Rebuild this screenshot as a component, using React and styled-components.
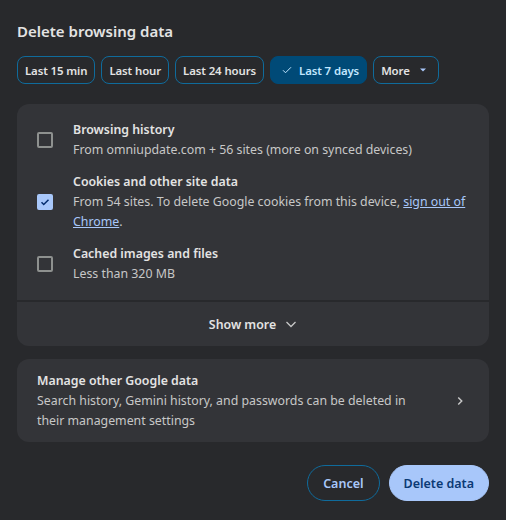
import React from "react";
import styled, { createGlobalStyle } from "styled-components";

const GlobalStyle = createGlobalStyle`
  html, body {
    margin: 0;
    padding: 0;
    background: #28292c;
  }
  body {
    font-family: "Noto Sans", "Open Sans", sans-serif;
    color: #e3e3e3;
  }
`;

const Dialog = styled.div`
  width: 506px;
  height: 520px;
  box-sizing: border-box;
  padding: 19px 17px 0 17px;
  display: flex;
  flex-direction: column;
`;

const Title = styled.h1`
  margin: 0;
  font-size: 15px;
  font-weight: 600;
  line-height: 24px;
  color: #e3e3e3;
`;

const Chips = styled.div`
  display: flex;
  gap: 6px;
  margin-top: 13px;
`;

const Chip = styled.button`
  flex: none;
  margin: 0;
  white-space: nowrap;
  height: 28px;
  box-sizing: border-box;
  padding: ${(p) => (p.$selected ? "0 7px 0 10px" : p.$menu ? "0 11px 0 7px" : "0 7px")};
  border-radius: 8px;
  border: 1px solid ${(p) => (p.$selected ? "#004a77" : "#0f6b9c")};
  background: ${(p) => (p.$selected ? "#004a77" : "transparent")};
  color: ${(p) => (p.$selected ? "#c2e7ff" : "#e3e3e3")};
  font-family: inherit;
  font-size: 11.4px;
  letter-spacing: -0.1px;
  font-weight: 600;
  display: flex;
  align-items: center;
  gap: ${(p) => (p.$menu ? "9px" : "6px")};
`;

const Card = styled.div`
  margin-top: 20px;
  display: flex;
  flex-direction: column;
  gap: 2px;
  border-radius: 12px;
  overflow: hidden;
`;

const Section = styled.div`
  background: #333438;
  padding: ${(p) => p.$pad || "0"};
`;

const Item = styled.div`
  display: flex;
  align-items: center;
  gap: 20px;
  padding: 6px 20px;
`;

const Box = styled.span`
  width: 16px;
  height: 16px;
  flex: none;
  box-sizing: border-box;
  border-radius: 2px;
  border: 2px solid ${(p) => (p.$checked ? "#a8c7fa" : "#8e918f")};
  background: ${(p) => (p.$checked ? "#a8c7fa" : "transparent")};
  display: flex;
  align-items: center;
  justify-content: center;
`;

const ItemText = styled.div`
  display: flex;
  flex-direction: column;
`;

const ItemTitle = styled.div`
  font-size: 12.35px;
  font-weight: 600;
  line-height: 20px;
  color: #e3e3e3;
`;

const ItemSub = styled.div`
  font-size: 12.35px;
  line-height: 20px;
  color: #c7c7c7;
`;

const Link = styled.a`
  color: #a8c7fa;
  text-decoration: underline;
`;

const ShowMore = styled.div`
  height: 44px;
  display: flex;
  align-items: center;
  justify-content: center;
  gap: 9px;
  font-size: 12.35px;
  font-weight: 600;
  color: #e3e3e3;
`;

const Manage = styled.div`
  margin-top: 13px;
  background: #333438;
  border-radius: 12px;
  padding: 12px 22px 11px 20px;
  display: flex;
  align-items: center;
  justify-content: space-between;
`;

const ManageText = styled.div`
  width: 380px;
`;

const Footer = styled.div`
  display: flex;
  justify-content: flex-end;
  gap: 9px;
  margin-top: 23px;
`;

const Button = styled.button`
  height: 36px;
  box-sizing: border-box;
  border-radius: 18px;
  padding: 0 ${(p) => (p.$primary ? "14px" : "15px")};
  border: 1px solid ${(p) => (p.$primary ? "#a8c7fa" : "#0f6b9c")};
  background: ${(p) => (p.$primary ? "#a8c7fa" : "transparent")};
  color: ${(p) => (p.$primary ? "#0b3a75" : "#a8c7fa")};
  font-family: inherit;
  font-size: 12.5px;
  font-weight: 600;
`;

const items = [
  { title: "Browsing history", sub: "From omniupdate.com + 56 sites (more on synced devices)" },
  {
    title: "Cookies and other site data",
    checked: true,
    sub: (
      <>
        From 54 sites. To delete Google cookies from this device, <Link>sign out of</Link>{" "}
        <Link>Chrome</Link>.
      </>
    ),
  },
  { title: "Cached images and files", sub: "Less than 320 MB" },
];

export default function App() {
  return (
    <>
      <GlobalStyle />
      <Dialog>
        <Title>Delete browsing data</Title>
        <Chips>
          <Chip>Last 15 min</Chip>
          <Chip>Last hour</Chip>
          <Chip>Last 24 hours</Chip>
          <Chip $selected>
            <svg width="12" height="12" viewBox="0 0 24 24" fill="none" stroke="#c2e7ff" strokeWidth="2">
              <path d="M4 12.5l5 5L20 6.5" />
            </svg>
            Last 7 days
          </Chip>
          <Chip $menu>
            More
            <svg width="8" height="8" viewBox="0 0 8 8">
              <path d="M1 2.5h6L4 5.5z" fill="#a8c7fa" />
            </svg>
          </Chip>
        </Chips>
        <Card>
          <Section $pad="10px 0 10px">
            {items.map((it) => (
              <Item key={it.title}>
                <Box $checked={it.checked}>
                  {it.checked && (
                    <svg width="12" height="12" viewBox="0 0 24 24" fill="none" stroke="#062e6f" strokeWidth="3">
                      <path d="M5 12.5l4.5 4.5L19 7.5" />
                    </svg>
                  )}
                </Box>
                <ItemText>
                  <ItemTitle>{it.title}</ItemTitle>
                  <ItemSub>{it.sub}</ItemSub>
                </ItemText>
              </Item>
            ))}
          </Section>
          <Section>
            <ShowMore>
              Show more
              <svg width="12" height="12" viewBox="0 0 12 12" fill="none" stroke="#c7c7c7" strokeWidth="1.3">
                <path d="M1.5 4l4.5 4.5L10.5 4" />
              </svg>
            </ShowMore>
          </Section>
        </Card>
        <Manage>
          <ManageText>
            <ItemTitle>Manage other Google data</ItemTitle>
            <ItemSub>Search history, Gemini history, and passwords can be deleted in their management settings</ItemSub>
          </ManageText>
          <svg width="14" height="14" viewBox="0 0 24 24" fill="none" stroke="#c7c7c7" strokeWidth="2.5">
            <path d="M9 6l6 6-6 6" />
          </svg>
        </Manage>
        <Footer>
          <Button>Cancel</Button>
          <Button $primary>Delete data</Button>
        </Footer>
      </Dialog>
    </>
  );
}
